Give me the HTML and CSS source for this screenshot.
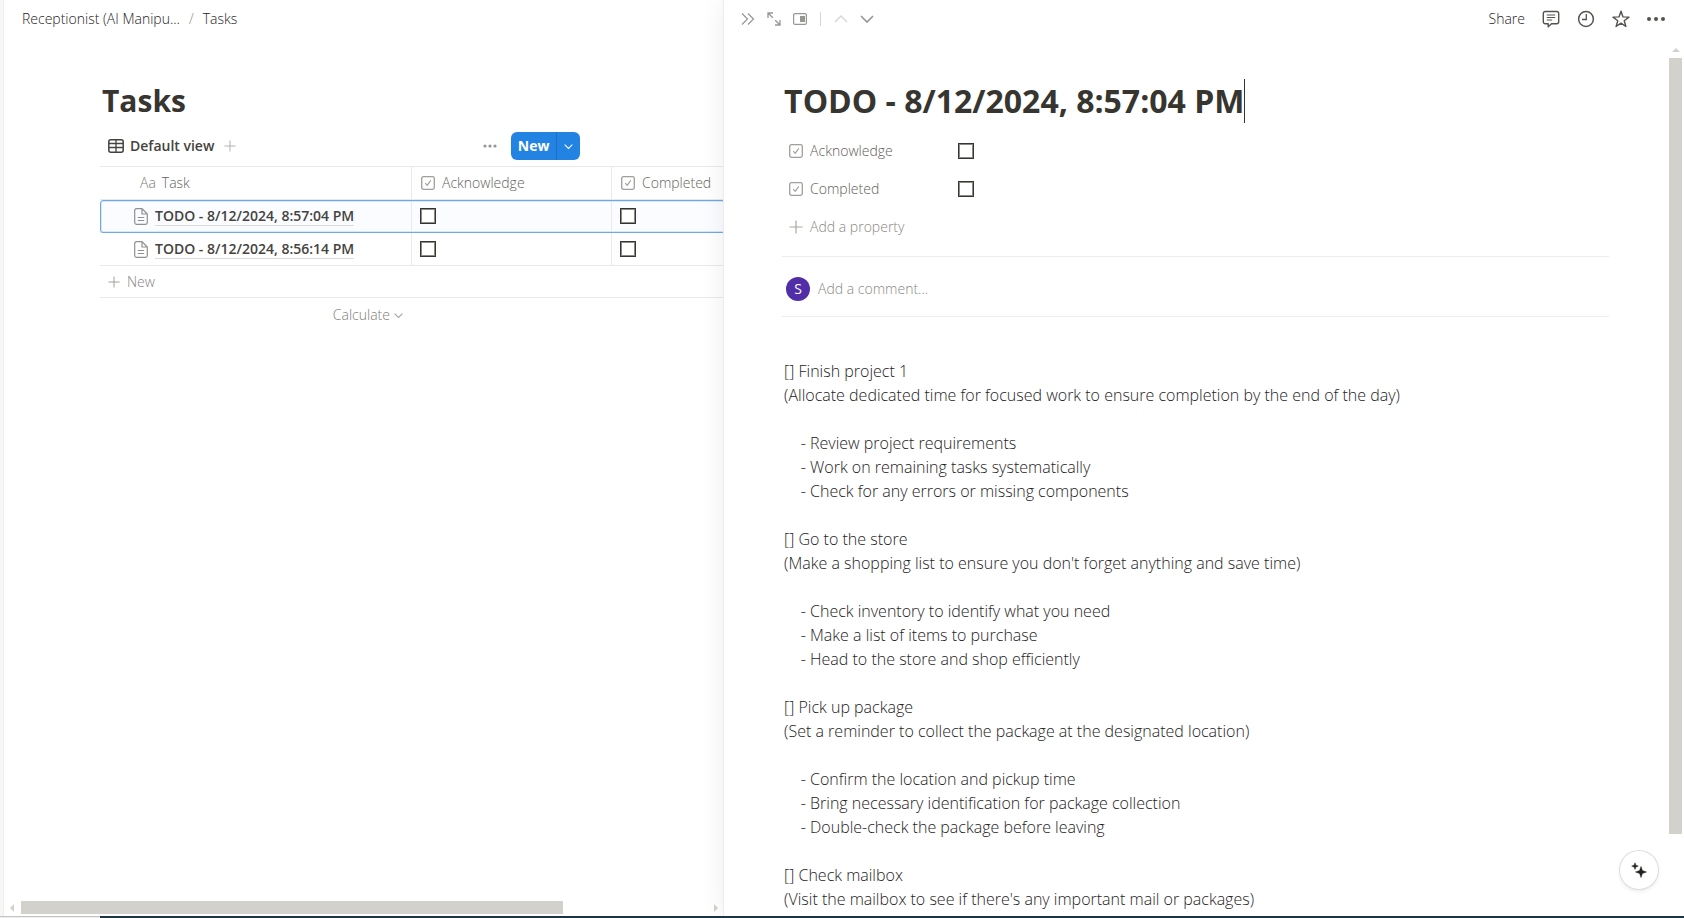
FILE: index.html
```html
<!DOCTYPE html>
<html lang="en">
<head>
<meta charset="utf-8">
<meta name="viewport" content="width=device-width, initial-scale=1">
<title>Tasks</title>
<link rel="stylesheet" href="styles.css">
</head>
<body>
<svg class="sprite" aria-hidden="true">
  <symbol id="i-check" viewBox="0 0 14 14"><rect x=".7" y=".7" width="12.6" height="12.6" rx="1.8" fill="none" stroke="currentColor" stroke-width="1.3"/><path d="M4.2 7.2l2 2.2 3.6-5" fill="none" stroke="currentColor" stroke-width="1.1"/></symbol>
  <symbol id="i-plus" viewBox="0 0 14 14"><path d="M7 .5v13M.5 7h13" fill="none" stroke="currentColor" stroke-width="1.2"/></symbol>
  <symbol id="i-page" viewBox="0 0 14 17"><path d="M2.5.7H8L13.3 6v8.5a1.8 1.8 0 0 1-1.8 1.8h-9A1.8 1.8 0 0 1 .7 14.500V2.500A1.800 1.800 0 0 1 2.500.7zM8 .7V6h5.300M3.800 9.500h6.400M3.800 12.500h6.400" fill="none" stroke="currentColor" stroke-width="1.2"/></symbol>
  <symbol id="i-down" viewBox="0 0 14 14"><path d="M1 4l6 6 6-6" fill="none" stroke="currentColor" stroke-width="1.6"/></symbol>
</svg>
<div class="app">
  <aside class="rail"></aside>
  <main class="board">
    <nav class="crumbs" aria-label="Breadcrumb">
      <a href="#">Receptionist (AI Manipu...</a><span class="slash">/</span><a href="#">Tasks</a>
    </nav>
    <div class="board-content">
      <h1 class="title">Tasks</h1>
      <div class="view-bar">
        <button class="view-tab" type="button">
          <svg width="16" height="14" viewBox="0 0 16 14"><rect x=".8" y=".8" width="14.400" height="12.400" rx="2" fill="none" stroke="currentColor" stroke-width="1.500"/><path d="M1 4.500h14M1 8.500h14M8 1v12" fill="none" stroke="currentColor" stroke-width="1.300"/></svg>
          Default view
        </button>
        <button class="icon-btn faint" type="button" aria-label="Add view"><svg width="12" height="12"><use href="#i-plus"/></svg></button>
        <div class="view-actions">
          <button class="icon-btn muted" type="button" aria-label="View options"><svg width="14" height="4" viewBox="0 0 14 4"><g fill="currentColor"><circle cx="2" cy="2" r="1.600"/><circle cx="7" cy="2" r="1.600"/><circle cx="12" cy="2" r="1.600"/></g></svg></button>
          <div class="new-split">
            <button class="new-main" type="button">New</button>
            <button class="new-more" type="button" aria-label="More ways to add"><svg width="9" height="9"><use href="#i-down"/></svg></button>
          </div>
        </div>
      </div>
      <table class="tasks">
        <colgroup><col class="col-task"><col class="col-check"><col></colgroup>
        <thead>
          <tr>
            <th scope="col" class="task-head"><span class="head"><span class="aa">Aa</span>Task</span></th>
            <th scope="col"><span class="head"><svg width="14" height="14"><use href="#i-check"/></svg>Acknowledge</span></th>
            <th scope="col"><span class="head"><svg width="14" height="14"><use href="#i-check"/></svg>Completed</span></th>
          </tr>
        </thead>
        <tbody>
          <tr class="selected">
            <td><span class="task"><svg width="14" height="17"><use href="#i-page"/></svg><a href="#">TODO - 8/12/2024, 8:57:04 PM</a></span></td>
            <td><input class="box" type="checkbox" aria-label="Acknowledge 8:57:04 PM"></td>
            <td><input class="box" type="checkbox" aria-label="Completed 8:57:04 PM"></td>
          </tr>
          <tr>
            <td><span class="task"><svg width="14" height="17"><use href="#i-page"/></svg><a href="#">TODO - 8/12/2024, 8:56:14 PM</a></span></td>
            <td><input class="box" type="checkbox" aria-label="Acknowledge 8:56:14 PM"></td>
            <td><input class="box" type="checkbox" aria-label="Completed 8:56:14 PM"></td>
          </tr>
        </tbody>
      </table>
      <button class="new-row" type="button"><svg width="12" height="12"><use href="#i-plus"/></svg>New</button>
      <button class="calculate" type="button">Calculate<svg width="9" height="9"><use href="#i-down"/></svg></button>
    </div>
    <div class="hscroll" aria-hidden="true">
      <svg width="4" height="8" viewBox="0 0 4 8"><path d="M4 0v8L0 4z" fill="currentColor"/></svg>
      <div class="htrack"><div class="hthumb"></div></div>
      <svg width="4" height="8" viewBox="0 0 4 8"><path d="M0 0v8l4-4z" fill="currentColor"/></svg>
    </div>
  </main>
  <section class="peek">
    <header class="toolbar">
      <div class="tools-left">
        <button class="icon-btn muted" type="button" aria-label="Close"><svg width="14" height="14" viewBox="0 0 14 14"><path d="M1 1.500L6.500 7 1 12.500M7 1.500L12.500 7 7 12.500" fill="none" stroke="currentColor" stroke-width="1.200"/></svg></button>
        <button class="icon-btn muted" type="button" aria-label="Open as full page"><svg width="14" height="14" viewBox="0 0 14 14"><path d="M1 6V1h5M1 1l4.800 4.800M13 8v5H8M13 13L8.200 8.200" fill="none" stroke="currentColor" stroke-width="1.300"/></svg></button>
        <button class="icon-btn muted" type="button" aria-label="Peek mode"><svg width="14" height="12" viewBox="0 0 14 12"><rect x=".6" y=".6" width="12.800" height="10.800" rx="1.500" fill="none" stroke="currentColor" stroke-width="1.200"/><path d="M7 3h5v6H7z" fill="currentColor"/></svg></button>
        <span class="rule"></span>
        <button class="icon-btn pale" type="button" aria-label="Previous"><svg width="14" height="14" viewBox="0 0 14 14"><path d="M1 10l6-6 6 6" fill="none" stroke="currentColor" stroke-width="1.400"/></svg></button>
        <button class="icon-btn muted" type="button" aria-label="Next"><svg width="14" height="14"><use href="#i-down"/></svg></button>
      </div>
      <div class="tools-right">
        <button class="share" type="button">Share</button>
        <button class="icon-btn dark" type="button" aria-label="Comments"><svg width="18" height="18" viewBox="0 0 18 18"><path d="M3.300 1.500h11.400a2 2 0 0 1 2 2v8.300a2 2 0 0 1-2 2H9.500L6.200 16.700v-2.900H3.300a2 2 0 0 1-2-2V3.500a2 2 0 0 1 2-2z" fill="none" stroke="currentColor" stroke-width="1.400" stroke-linejoin="round"/><path d="M4.800 5h8.400M4.800 7.500h8.400M4.800 10h5.400" fill="none" stroke="currentColor" stroke-width="1.100"/></svg></button>
        <button class="icon-btn dark" type="button" aria-label="Updates"><svg width="18" height="18" viewBox="0 0 18 18"><circle cx="9" cy="9" r="7.400" fill="none" stroke="currentColor" stroke-width="1.500"/><path d="M9.300 4v5.500H5" fill="none" stroke="currentColor" stroke-width="1.300"/></svg></button>
        <button class="icon-btn dark" type="button" aria-label="Favorite"><svg width="18" height="18" viewBox="0 0 18 18"><path d="M9 1.200l2 5.700 6 .2-4.800 3.600 1.700 5.800L9 13.100l-4.900 3.400 1.700-5.800L1 7.100l6-.2z" fill="none" stroke="currentColor" stroke-width="1.400" stroke-linejoin="round"/></svg></button>
        <button class="icon-btn dark" type="button" aria-label="More"><svg width="18" height="18" viewBox="0 0 18 18"><g fill="currentColor"><circle cx="2" cy="9" r="2"/><circle cx="9" cy="9" r="2"/><circle cx="16" cy="9" r="2"/></g></svg></button>
      </div>
    </header>
    <div class="peek-body">
      <article class="doc">
        <h2 class="title caret">TODO - 8/12/2024, 8:57:04 PM</h2>
        <div class="props">
          <label class="prop-name" for="p-ack"><svg width="14" height="14"><use href="#i-check"/></svg>Acknowledge</label>
          <input class="box" id="p-ack" type="checkbox">
          <label class="prop-name" for="p-done"><svg width="14" height="14"><use href="#i-check"/></svg>Completed</label>
          <input class="box" id="p-done" type="checkbox">
          <button class="add-prop" type="button"><svg width="14" height="14"><use href="#i-plus"/></svg>Add a property</button>
        </div>
        <div class="comment">
          <span class="avatar">S</span>
          <input class="comment-input" type="text" placeholder="Add a comment..." aria-label="Add a comment">
        </div>
        <div class="notes">[] Finish project 1
(Allocate dedicated time for focused work to ensure completion by the end of the day)

    - Review project requirements
    - Work on remaining tasks systematically
    - Check for any errors or missing components

[] Go to the store
(Make a shopping list to ensure you don't forget anything and save time)

    - Check inventory to identify what you need
    - Make a list of items to purchase
    - Head to the store and shop efficiently

[] Pick up package
(Set a reminder to collect the package at the designated location)

    - Confirm the location and pickup time
    - Bring necessary identification for package collection
    - Double-check the package before leaving

[] Check mailbox
(Visit the mailbox to see if there's any important mail or packages)</div>
      </article>
      <div class="vscroll" aria-hidden="true">
        <svg width="8" height="4" viewBox="0 0 8 4"><path d="M0 4h8L4 0z" fill="currentColor"/></svg>
        <div class="vtrack"><div class="vthumb"></div></div>
      </div>
      <button class="assist" type="button" aria-label="Ask AI"><svg width="16" height="16" viewBox="0 0 16 16"><path d="M10 4.500l1.400 4.100 4.100 1.400-4.100 1.400L10 15.500l-1.400-4.100L4.500 10l4.100-1.400zM4 .8l.9 2.400 2.400.9-2.400.9L4 7.400l-.9-2.400L.7 4.100l2.400-.9z" fill="currentColor" stroke="currentColor" stroke-width=".5"/></svg></button>
    </div>
  </section>
</div>
<footer class="desk-edge"><div class="desk-light"></div></footer>
</body>
</html>
```
FILE: styles.css
```css
* { box-sizing: border-box; }

body {
  margin: 0;
  height: 100vh;
  display: flex;
  flex-direction: column;
  overflow: hidden;
  background: #fff;
  color: #24221d;
  font: 300 14px/20px "Open Sans", "Noto Sans", sans-serif;
}

button, input { font: inherit; color: inherit; }
button { border: 0; padding: 0; background: none; }
a { color: inherit; text-decoration: none; }
svg { display: block; flex: none; }
.sprite { position: absolute; width: 0; height: 0; }

.app { flex: 1; min-height: 0; display: flex; }
.rail { width: 4px; background: #f7f7f5; border-right: 1px solid #eeeeec; }

.board { flex: 0 0 calc(43% - 4px); min-width: 0; display: flex; flex-direction: column; overflow: hidden; }
.crumbs { display: flex; align-items: center; gap: 9px; height: 38px; padding-left: 18px; }
.slash { color: #8f8e8a; }
.board-content { flex: 1; min-height: 0; padding: 41px 0 0 96px; }

.title { height: 44px; margin: 0; font-size: 32px; line-height: 44px; font-weight: 700; color: #37352f; }
.board .title { padding-left: 2px; font-size: 30px; }

.icon-btn { display: flex; align-items: center; justify-content: center; }
.muted { color: #979692; }
.faint { color: #b5b4b0; }
.pale { color: #d6d5d3; }
.dark { color: #55534e; }

.view-bar { display: flex; align-items: center; height: 40px; margin-top: 3px; padding: 0 144px 0 8px; }
.view-tab { display: flex; align-items: center; gap: 6px; font-weight: 600; color: #45433e; margin-right: 10px; white-space: nowrap; }
.view-actions { margin-left: auto; display: flex; align-items: center; gap: 14px; }
.new-split { display: flex; height: 28px; border-radius: 6px; overflow: hidden; background: #2383e2; color: #fff; }
.new-main { width: 46px; font-weight: 700; border-right: 1px solid #1d6fc0; }
.new-more { width: 23px; display: flex; align-items: center; justify-content: center; }

.tasks { width: 100%; table-layout: fixed; border-collapse: separate; border-spacing: 0; border-top: 1px solid #e9e9e7; }
.col-task { width: 311px; }
.col-check { width: 200px; }
.tasks th, .tasks td { height: 33px; padding: 0 8px; border-bottom: 1px solid #e9e9e7; text-align: left; vertical-align: middle; white-space: nowrap; }
.tasks th + th, .tasks td + td { border-left: 1px solid #e9e9e7; }
.tasks th { font-weight: 300; color: #64635e; }
.tasks .task-head { padding-left: 40px; }
.head { display: flex; align-items: center; gap: 7px; padding-left: 1px; }
.task-head .head { gap: 6px; padding: 0; }
.aa { color: #7d7c78; }
.head svg { color: #a09f9b; }
.tasks td:first-child { padding-left: 34px; }
.task { display: flex; align-items: center; gap: 7px; font-weight: 600; color: #45433e; }
.task svg { color: #91908c; }
.task a { line-height: 18px; border-bottom: 1px solid #dbdad8; }
.selected { position: relative; background: #fafcff; }
.selected td:first-child::after {
  content: "";
  position: absolute;
  inset: 0 -4px 0 0;
  border: 1px solid #6fa9e3;
  border-radius: 3px;
  box-shadow: inset 0 0 0 1px #d6e7f8;
  pointer-events: none;
}

.box { appearance: none; display: block; width: 16px; height: 16px; margin: 0; border: 1px solid #37352f; box-shadow: inset 0 0 0 1px #8b8a85; background: #fff; }

.new-row { display: flex; align-items: center; gap: 7px; width: 100%; height: 32px; padding-left: 8px; color: #868580; border-bottom: 1px solid #e9e9e7; }
.calculate { display: flex; align-items: center; justify-content: flex-end; gap: 4px; width: 311px; height: 34px; padding-right: 8px; color: #7f7e79; }
.new-row svg, .calculate svg { color: #a3a29e; }

.hscroll { display: flex; align-items: center; gap: 7px; height: 17px; padding: 0 6px; color: #d3d1cb; }
.htrack { flex: 1; }
.hthumb { width: 79%; height: 13px; background: #d3d1cb; }

.peek { flex: 1; min-width: 0; display: flex; flex-direction: column; background: #fff; box-shadow: 0 0 0 1px #ededec, 0 0 24px #0f0f0f14; z-index: 1; }
.toolbar { display: flex; justify-content: space-between; align-items: center; height: 38px; padding: 0 19px 0 17px; }
.tools-left { display: flex; align-items: center; gap: 12px; }
.rule { width: 1px; height: 14px; margin: 0 1px; background: #d6d5d3; }
.tools-right { display: flex; align-items: center; gap: 17px; }

.peek-body { flex: 1; min-height: 0; display: flex; position: relative; }
.doc { flex: 1; min-width: 0; padding: 41px 60px 0 58px; overflow: hidden; }
.doc .title { padding-left: 2px; }
.caret::after { content: ""; display: inline-block; width: 1px; height: 44px; background: #37352f; vertical-align: bottom; }

.props { display: grid; grid-template-columns: 169px 1fr; grid-auto-rows: 38px; align-items: center; margin-top: 9px; padding-left: 7px; color: #5f5e59; }
.prop-name, .add-prop { display: flex; align-items: center; gap: 7px; white-space: nowrap; }
.prop-name svg { color: #a09f9b; }
.add-prop { color: #8a8984; }
.add-prop svg { color: #a8a7a3; }

.comment { display: flex; align-items: center; gap: 8px; height: 61px; margin-top: 10px; padding: 5px 4px 0; border: solid #ececea; border-width: 1px 0; }
.avatar { width: 24px; height: 24px; border-radius: 50%; background: #512da8; color: #fff; display: flex; align-items: center; justify-content: center; font-weight: 400; }
.comment-input { flex: 1; border: 0; padding: 0; outline: 0; background: none; }
.comment-input::placeholder { color: #8a8984; opacity: 1; }

.notes { margin-top: 42px; padding-left: 2px; font-size: 16px; line-height: 24px; white-space: pre-wrap; }

.vscroll { width: 13px; margin-right: 2px; padding: 10px 0 0; display: flex; flex-direction: column; align-items: center; gap: 6px; color: #d3d1cb; }
.vtrack { flex: 1; width: 100%; }
.vthumb { width: 100%; height: 90.4%; background: #d3d1cb; }

.assist {
  position: absolute;
  right: 26px;
  bottom: 27px;
  width: 38px;
  height: 38px;
  display: flex;
  align-items: center;
  justify-content: center;
  border-radius: 50%;
  background: #fff;
  box-shadow: 0 0 0 1px #dededc, 0 2px 4px #0f0f0f1a;
}

.desk-edge { height: 2px; background: #1d3441; z-index: 2; }
.desk-light { width: 100px; height: 2px; background: #eeeeee; border-top: 1px solid #c4c4c4; }
```
